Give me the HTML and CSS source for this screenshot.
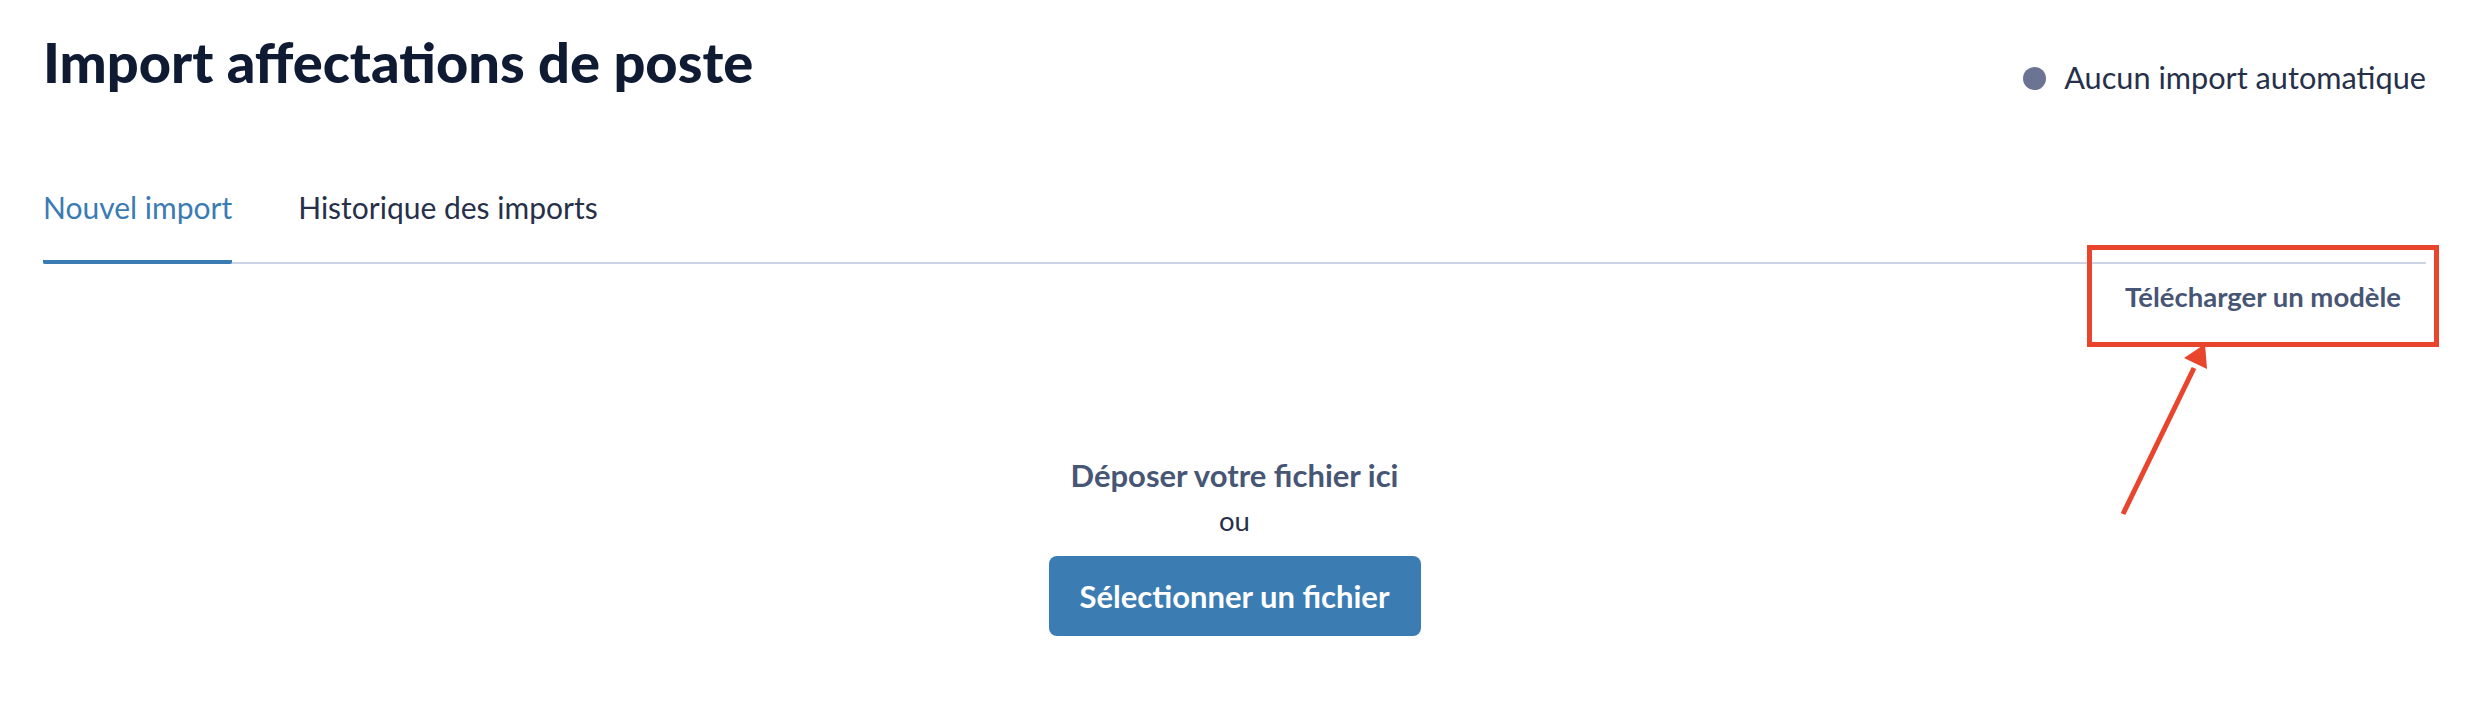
FILE: index.html
```html
<!DOCTYPE html>
<html lang="fr">
<head>
<meta charset="utf-8">
<title>Import affectations de poste</title>
<link rel="stylesheet" href="styles.css">
</head>
<body>
<div class="page">
  <header class="header">
    <h1 class="title">Import affectations de poste</h1>
    <div class="status"><span class="status-dot"></span><span class="status-text">Aucun import automatique</span></div>
  </header>
  <nav class="tabs">
    <a class="tab tab-active">Nouvel import</a>
    <a class="tab">Historique des imports</a>
  </nav>
  <div class="toolbar">
    <a class="template-link">Télécharger un modèle</a>
  </div>
  <section class="dropzone">
    <p class="drop-title">Déposer votre fichier ici</p>
    <p class="drop-or">ou</p>
    <button class="select-btn">Sélectionner un fichier</button>
  </section>
</div>
<svg class="annotation" width="2492" height="724" viewBox="0 0 2492 724">
  <rect x="2089.5" y="247.5" width="347" height="97" fill="none" stroke="#e8452c" stroke-width="5"/>
  <line x1="2123" y1="514" x2="2194" y2="368" stroke="#e8452c" stroke-width="5"/>
  <polygon points="2205,344 2184,358 2207,369" fill="#e8452c"/>
</svg>
</body>
</html>
```

FILE: styles.css
```css
* { box-sizing: border-box; }
html, body { margin: 0; padding: 0; background: #ffffff; }
body { font-family: "Lato", "Liberation Sans", sans-serif; color: #27304a; }

.page {
  margin: 0 66px 0 43px;
  padding-top: 30px;
}

.header {
  display: flex;
  justify-content: space-between;
  align-items: flex-start;
}

.title {
  margin: 0;
  font-size: 56px;
  font-weight: 900;
  line-height: 64px;
  color: #0f1a33;
}

.status {
  display: flex;
  align-items: center;
  gap: 18px;
  margin-top: 30px;
}
.status-dot {
  width: 23px;
  height: 23px;
  border-radius: 50%;
  background: #6b7593;
}
.status-text {
  font-size: 30.7px;
  line-height: 36px;
  color: #27304a;
}

.tabs {
  display: flex;
  gap: 66px;
  margin-top: 93px;
  border-bottom: 2px solid #cdd6e6;
}
.tab {
  font-size: 30px;
  line-height: 36px;
  color: #27304a;
  padding-bottom: 35px;
  margin-bottom: -2px;
  border-bottom: 4px solid transparent;
}
.tab-active {
  color: #3b7bb3;
  border-bottom-color: #3b7bb3;
  border-radius: 2px;
}

.toolbar {
  display: flex;
  justify-content: flex-end;
  padding-right: 25px;
  margin-top: 16px;
}
.template-link {
  font-size: 27.5px;
  font-weight: 700;
  line-height: 33px;
  color: #475675;
}

.dropzone {
  display: flex;
  flex-direction: column;
  align-items: center;
  margin-top: 144px;
}
.drop-title {
  margin: 0;
  font-size: 31px;
  font-weight: 700;
  line-height: 37px;
  color: #475675;
}
.drop-or {
  margin: 10px 0 0;
  font-size: 27.5px;
  line-height: 33px;
  color: #27304a;
}
.select-btn {
  margin-top: 19px;
  width: 372px;
  height: 80px;
  border: none;
  border-radius: 8px;
  background: #3b7cb3;
  color: #ffffff;
  font-family: "Lato", "Liberation Sans", sans-serif;
  font-size: 31px;
  font-weight: 700;
}

.annotation {
  position: absolute;
  left: 0;
  top: 0;
  pointer-events: none;
}
```
